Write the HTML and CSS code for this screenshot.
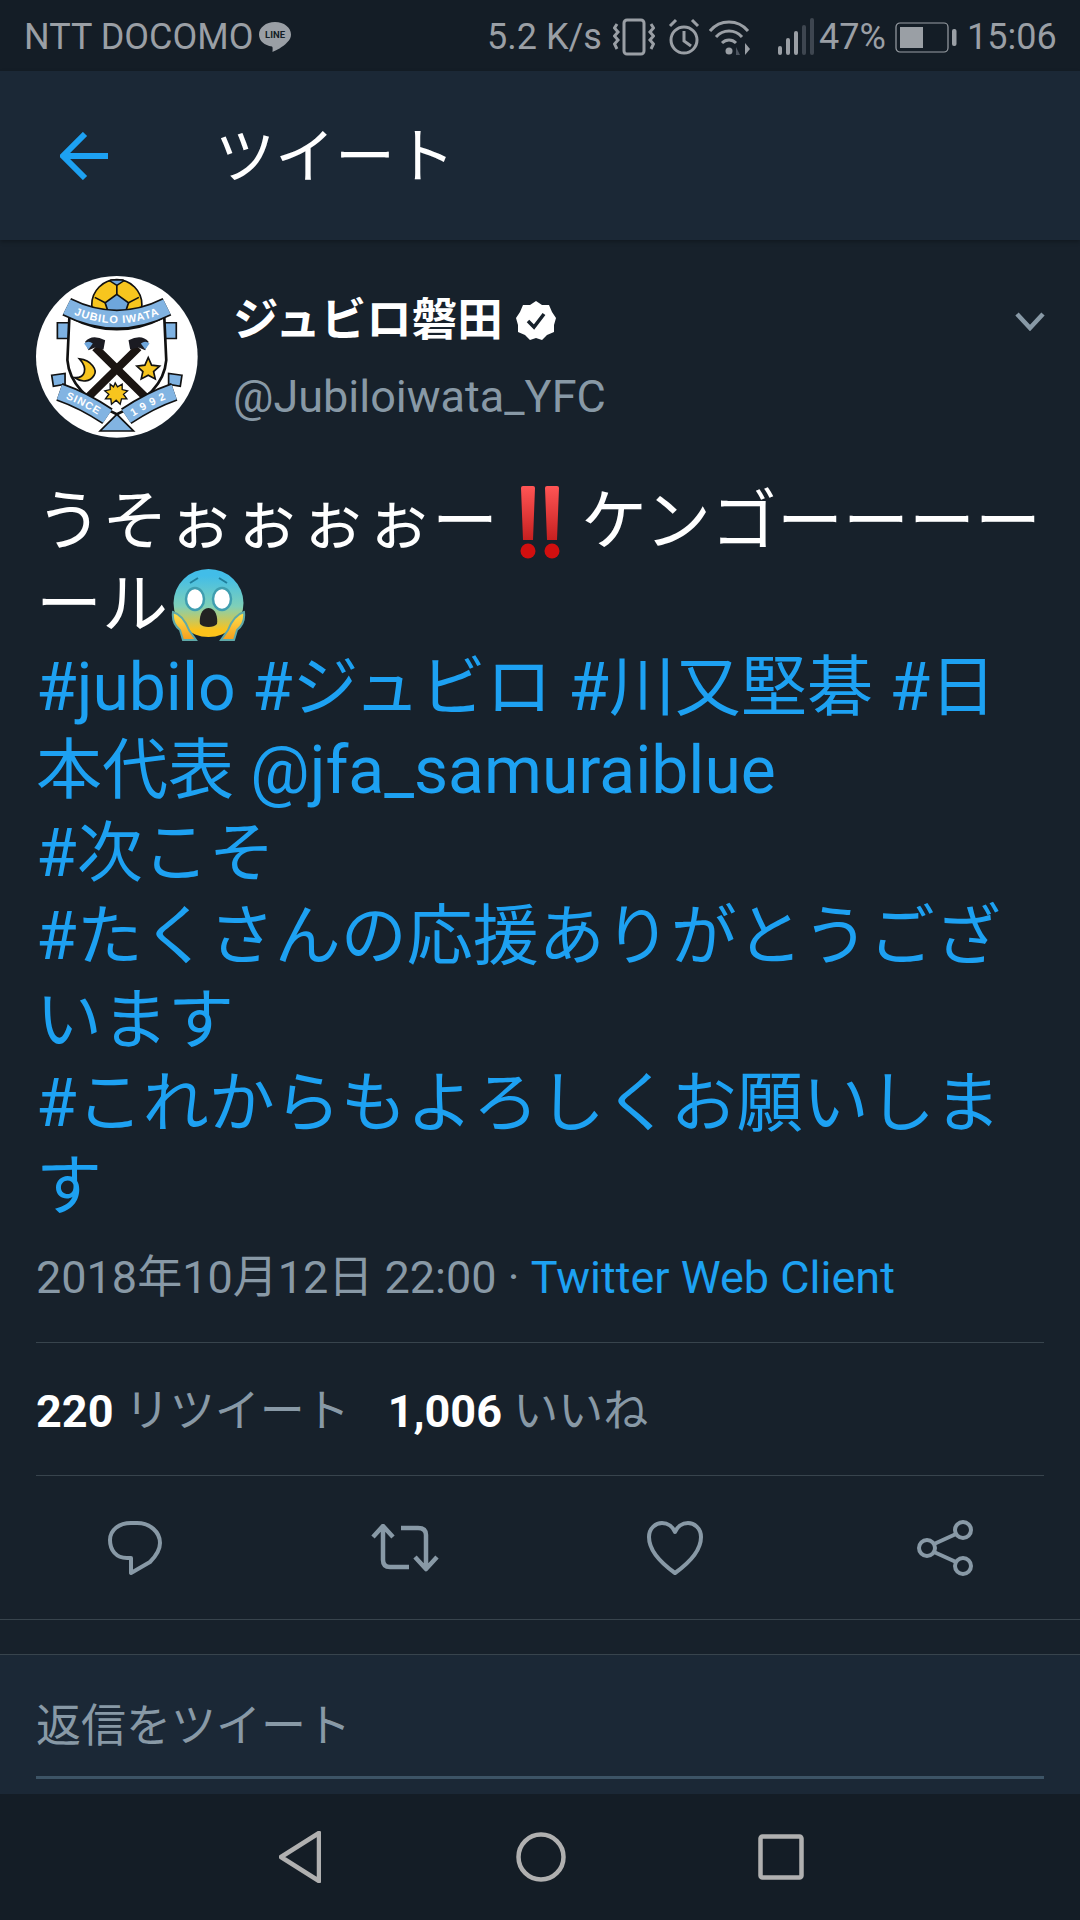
FILE: index.html
```html
<!DOCTYPE html>
<html lang="ja">
<head>
<meta charset="utf-8">
<title>ツイート</title>
<link rel="stylesheet" href="styles.css">
</head>
<body>
<div class="screen">
  <div class="status">
    <span class="carrier">NTT DOCOMO</span>
    <svg class="line-icon" width="34" height="32" viewBox="0 0 34 32"><path d="M17 1C8 1 1 6.500 1 13.500C1 20 6.500 24.500 14 25.500C15 26 14.500 29 14.500 31C18 29.500 25 26 29 21.500C32 18.500 33 16.500 33 13.500C33 6.500 26 1 17 1Z" fill="#9a9fa5"/><text x="17" y="17" class="line-text" text-anchor="middle">LINE</text></svg>
    <span class="spacer"></span>
    <span class="speed">5.2 K/s</span>
    <svg class="st-vib" width="42" height="38" viewBox="0 0 42 38"><rect x="11" y="2" width="20" height="34" rx="3" fill="none" stroke="#9a9fa5" stroke-width="3"/><path d="M4 6L1.500 10L5 14L1.500 18L5 22L1.500 26L4 31M38 6L40.500 10L37 14L40.500 18L37 22L40.500 26L38 31" fill="none" stroke="#9a9fa5" stroke-width="3"/></svg>
    <svg class="st-alarm" width="32" height="38" viewBox="0 0 32 38"><circle cx="16" cy="22" r="13" fill="none" stroke="#9a9fa5" stroke-width="3"/><path d="M16 13V23L23 28M2 8L8 2M30 8L24 2" fill="none" stroke="#9a9fa5" stroke-width="3"/></svg>
    <svg class="st-wifi" width="42" height="38" viewBox="0 0 42 38"><path d="M1 13C11 1 29 1 39 13M7 19C14 11 26 11 33 19M13 25C17 21 23 21 27 25" fill="none" stroke="#9a9fa5" stroke-width="3"/><circle cx="20" cy="33" r="3.500" fill="#9a9fa5"/><path d="M36 25V37L41 31Z" fill="#9a9fa5"/><path d="M27 37V29L31 37Z" fill="#4d5560"/></svg>
    <svg class="st-signal" width="36" height="38" viewBox="0 0 36 38"><rect x="0" y="28" width="4" height="9" rx="2" fill="#9a9fa5"/><rect x="8" y="20" width="4" height="17" rx="2" fill="#9a9fa5"/><rect x="16" y="13" width="4" height="24" rx="2" fill="#9a9fa5"/><rect x="24" y="7" width="4" height="30" rx="2" fill="#3e4650"/><rect x="32" y="0" width="4" height="37" rx="2" fill="#3e4650"/></svg>
    <span class="pct">47%</span>
    <svg class="st-batt" width="62" height="34" viewBox="0 0 62 34"><rect x="1" y="3" width="52" height="29" rx="4" fill="none" stroke="#9a9fa5" stroke-width="1.200"/><rect x="5" y="7" width="23" height="21" fill="#9a9fa5"/><rect x="57" y="9" width="4.500" height="17" rx="2" fill="#9a9fa5"/></svg>
    <span class="clock">15:06</span>
  </div>

  <header class="topbar">
    <svg class="back" width="48" height="48" viewBox="0 0 48 48"><path d="M25 2L3 24L25 46M3 24H48" fill="none" stroke="#1da1f2" stroke-width="6"/></svg>
    <h1 class="title">ツイート</h1>
  </header>

  <main class="tweet">
    <div class="author">
      <svg class="avatar" width="162" height="162" viewBox="48 48 485 485">
        <circle cx="290" cy="290" r="242" fill="#fff"/>
        <circle cx="290" cy="134" r="75" fill="#f7c51e" stroke="#111" stroke-width="5"/>
        <path d="M290 103L325 128L312 168H268L255 128Z" fill="#6ea6dc" stroke="#111" stroke-width="5"/>
        <path d="M268 62L290 76L312 62L308 60H272Z" fill="#6ea6dc" stroke="#111" stroke-width="4"/>
        <path d="M290 76V103M255 128L224 112M325 128L356 112M268 168L240 150M312 168L340 150" fill="none" stroke="#111" stroke-width="5"/>
        <path d="M112 188H158V235H112ZM422 188H468V235H422Z" fill="#7eb2e2" stroke="#111" stroke-width="5"/>
        <path d="M148 170Q290 245 432 170L438 300Q430 400 290 462Q150 400 142 300Z" fill="#fff" stroke="#111" stroke-width="8"/>
        <path d="M140 140Q290 215 440 140" fill="none" stroke="#111" stroke-width="58"/>
        <path id="rib" d="M140 140Q290 215 440 140" fill="none" stroke="#82b4e2" stroke-width="48"/>
        <text class="logo-text logo-top"><textPath href="#rib" startOffset="50%" text-anchor="middle">JUBILO IWATA</textPath></text>
        <path d="M225 262L375 410M355 262L205 410" stroke="#1b1512" stroke-width="24" fill="none"/>
        <path d="M195 245Q215 220 255 240L250 268L225 262L205 270Z" fill="#1b1b22"/>
        <path d="M385 245Q365 220 325 240L330 268L355 262L375 270Z" fill="#1b1b22"/>
        <path d="M192 250Q205 240 218 250L205 268Z" fill="#6ea6dc"/>
        <path d="M388 250Q375 240 362 250L375 268Z" fill="#6ea6dc"/>
        <path d="M178 296C215 300 232 330 222 345C210 365 185 368 163 352C195 355 205 325 178 296Z" fill="#f7c51e" stroke="#111" stroke-width="5"/>
        <path d="M384 292L394 315L418 318L400 334L405 356L384 345L363 356L368 334L350 318L374 315Z" fill="#f7c51e" stroke="#111" stroke-width="5"/>
        <path d="M285 368L292 380L306 372L306 388L322 392L310 402L320 416L304 416L300 432L288 420L274 432L272 416L256 416L266 402L254 392L270 388L270 372L280 380Z" fill="#f7c51e" stroke="#111" stroke-width="4"/>
        <path d="M95 345L135 340L135 372L100 378ZM485 345L445 340L445 372L480 378Z" fill="#7eb2e2" stroke="#111" stroke-width="5"/>
        <path id="ribl" d="M118 395Q190 420 262 468" fill="none" stroke="#111" stroke-width="56"/>
        <path d="M118 395Q190 420 262 468" fill="none" stroke="#82b4e2" stroke-width="46"/>
        <path id="ribr" d="M318 468Q390 420 462 395" fill="none" stroke="#111" stroke-width="56"/>
        <path d="M318 468Q390 420 462 395" fill="none" stroke="#82b4e2" stroke-width="46"/>
        <text class="logo-text logo-low"><textPath href="#ribl" startOffset="50%" text-anchor="middle">SINCE</textPath></text>
        <text class="logo-text logo-wide"><textPath href="#ribr" startOffset="50%" text-anchor="middle">1992</textPath></text>
        <path d="M290 462L240 512H340Z" fill="#82b4e2" stroke="#111" stroke-width="5"/>
      </svg>
      <div class="names">
        <div class="name-row">
          <span class="name">ジュビロ磐田</span>
          <svg class="badge" width="40" height="40" viewBox="0 0 40 40"><path d="M20 0L26 4L33 4L36 11L40 17L38 24L38 31L31 34L26 39L20 37L14 39L9 34L2 31L2 24L0 17L4 11L7 4L14 4Z" fill="#fff"/><path d="M12 20L18 26L28 13" fill="none" stroke="#17212b" stroke-width="3.500"/></svg>
        </div>
        <div class="handle">@Jubiloiwata_YFC</div>
      </div>
      <svg class="chevron" width="30" height="19" viewBox="0 0 30 19"><path d="M2 2L15 16L28 2" fill="none" stroke="#8899a6" stroke-width="4.500"/></svg>
    </div>

    <div class="body">
      <div class="ln">うそぉぉぉぉー<svg class="bang" width="40" height="74" viewBox="0 0 40 74"><defs><linearGradient id="r" x1="0" y1="0" x2="0" y2="1"><stop offset="0" stop-color="#ff5555"/><stop offset="1" stop-color="#c62020"/></linearGradient></defs><path d="M1 3Q1 1 3 1H13Q15 1 15 3L13 55H3ZM25 3Q25 1 27 1H37Q39 1 39 3L37 55H27Z" fill="url(#r)"/><circle cx="8" cy="66" r="7.500" fill="#d20f0f"/><circle cx="32" cy="66" r="7.500" fill="#d20f0f"/></svg>ケンゴーーーー</div>
      <div class="ln">ール<svg class="face" width="75" height="74" viewBox="0 0 75 74"><defs><linearGradient id="f" x1="0" y1="0" x2="0" y2="1"><stop offset="0.100" stop-color="#42bde8"/><stop offset="0.550" stop-color="#7fd0b8"/><stop offset="0.900" stop-color="#fcc21b"/></linearGradient><linearGradient id="h" x1="0" y1="0" x2="0" y2="1"><stop offset="0" stop-color="#ffe34d"/><stop offset="1" stop-color="#f59e1e"/></linearGradient></defs><ellipse cx="37.500" cy="35" rx="35" ry="34" fill="url(#f)"/><ellipse cx="24" cy="31" rx="9" ry="11" fill="#fff" stroke="#3f9eb0" stroke-width="2.500"/><ellipse cx="51" cy="31" rx="9" ry="11" fill="#fff" stroke="#3f9eb0" stroke-width="2.500"/><path d="M19 15L27 10M56 15L48 10" stroke="#1f7f9c" stroke-width="2" fill="none"/><path d="M37.500 40C45 40 47 50 46 56C43 60 32 60 29 56C28 50 30 40 37.500 40Z" fill="#222"/><path d="M2 44C9 46 14 52 18 62L25 72H12L9 62C4 58 1 52 2 44ZM73 44C66 46 61 52 57 62L50 72H63L66 62C71 58 74 52 73 44Z" fill="url(#h)" stroke="#5fa9a8" stroke-width="2"/></svg></div>
      <div class="ln link">#jubilo #ジュビロ #川又堅碁 #日</div>
      <div class="ln link">本代表 @jfa_samuraiblue</div>
      <div class="ln link">#次こそ</div>
      <div class="ln link">#たくさんの応援ありがとうござ</div>
      <div class="ln link">います</div>
      <div class="ln link">#これからもよろしくお願いしま</div>
      <div class="ln link">す</div>
    </div>

    <div class="meta">2018年10月12日 22:00 · <span class="client">Twitter Web Client</span></div>

    <div class="stats">
      <span class="stat"><b class="num">220</b> リツイート</span>
      <span class="stat"><b class="num">1,006</b> いいね</span>
    </div>

    <div class="actions">
      <svg width="56" height="56" viewBox="0 0 56 56"><path d="M24 3H30C43 3 53 12 53 23C53 31 48 37 43 42L24 53V38H20C9 38 3 30 3 20C3 10 12 3 24 3Z" fill="none" stroke="#8899a6" stroke-width="4" stroke-linejoin="round"/></svg>
      <svg width="68" height="48" viewBox="0 0 68 48"><path d="M2 13L12 2L22 13M12 3V36Q12 43 19 43H38M30 4H47Q55 4 55 11V45M44 33L55 45L66 33" fill="none" stroke="#8899a6" stroke-width="4.500" stroke-linejoin="round"/></svg>
      <svg width="56" height="54" viewBox="0 0 56 54"><path d="M28 52C14 42 2 30 2 16C2 7 9 2 15 2C21 2 26 6 28 11C30 6 35 2 41 2C47 2 54 7 54 16C54 30 42 42 28 52Z" fill="none" stroke="#8899a6" stroke-width="4" stroke-linejoin="round"/></svg>
      <svg width="56" height="56" viewBox="0 0 56 56"><circle cx="46" cy="10" r="8" fill="none" stroke="#8899a6" stroke-width="4"/><circle cx="10" cy="28" r="8" fill="none" stroke="#8899a6" stroke-width="4"/><circle cx="46" cy="46" r="8" fill="none" stroke="#8899a6" stroke-width="4"/><path d="M17 24L39 14M17 32L39 42" stroke="#8899a6" stroke-width="4"/></svg>
    </div>
  </main>

  <div class="reply">
    <div class="reply-field">返信をツイート</div>
  </div>

  <nav class="navbar">
    <svg width="42" height="52" viewBox="0 0 42 52"><path d="M40 2V50L2 26Z" fill="none" stroke="#b0b0b0" stroke-width="4.500" stroke-linejoin="round"/></svg>
    <svg class="nav-home" width="50" height="50" viewBox="0 0 50 50"><circle cx="25" cy="25" r="22.500" fill="none" stroke="#b0b0b0" stroke-width="4.500"/></svg>
    <svg width="46" height="46" viewBox="0 0 46 46"><rect x="2.500" y="2.500" width="41" height="41" rx="2" fill="none" stroke="#b0b0b0" stroke-width="4.500"/></svg>
  </nav>
</div>
</body>
</html>
```

FILE: styles.css
```css
* { box-sizing: border-box; }
html, body { margin: 0; padding: 0; }
body {
  font-family: Roboto, "Noto Sans CJK JP", sans-serif;
  background: #17212b;
  color: #fff;
}
.screen {
  width: 1080px;
  height: 1920px;
  display: flex;
  flex-direction: column;
  overflow: hidden;
}

.status {
  height: 71px;
  flex: none;
  background: #141d26;
  color: #9a9fa5;
  display: flex;
  align-items: center;
  padding: 2px 26px 0 24px;
  font-size: 36px;
  position: relative;
}
.carrier { width: 222px; white-space: nowrap; }
.line-icon { margin-left: 12px; margin-top: 1px; }
.line-text { font: 700 9.500px Roboto, sans-serif; fill: #141d26; }
.spacer { flex: 1; }
.speed { width: 113px; white-space: nowrap; }
.st-vib { margin-left: 13px; }
.st-alarm { margin-left: 13px; }
.st-wifi { margin-left: 9px; }
.st-signal { margin-left: 27px; }
.pct { margin-left: 5px; width: 65px; }
.st-batt { margin-left: 11px; }
.clock { margin-left: 10px; width: 87px; white-space: nowrap; }

.topbar {
  height: 169px;
  flex: none;
  background: #1b2836;
  display: flex;
  align-items: center;
  padding-left: 60px;
  box-shadow: 0 2px 4px rgba(0, 0, 0, 0.25);
  position: relative;
}
.title {
  margin: 4px 0 0 107px;
  font-size: 60px;
  font-weight: 400;
  line-height: 1;
}

.tweet {
  flex: 1;
  padding: 36px 36px 0;
  background: #17212b;
  border-bottom: 1px solid #38444d;
  margin-bottom: 34px;
  min-height: 0;
}
.author {
  display: flex;
  align-items: flex-start;
  height: 164px;
}
.avatar { flex: none; }
.names { margin-left: 35px; flex: 1; }
.name-row {
  display: flex;
  align-items: center;
  height: 76px;
  margin-top: 7px;
}
.name { font-size: 45.500px; font-weight: 700; line-height: 76px; }
.badge { margin-left: 13px; }
.handle {
  margin-top: 6px;
  font-size: 45px;
  line-height: 64px;
  color: #8899a6;
}
.chevron { margin-top: 36px; margin-right: -1px; }
.logo-text { font: 700 30px "Liberation Sans", sans-serif; fill: #fff; dominant-baseline: central; }
.logo-top { letter-spacing: 2px; font-size: 33px; }
.logo-low { letter-spacing: 3px; font-size: 32px; }
.logo-wide { letter-spacing: 14px; font-size: 32px; }

.body { margin-top: 40px; }
.ln {
  font-size: 66px;
  line-height: 83.100px;
  height: 83.100px;
  white-space: nowrap;
  display: flex;
  align-items: center;
}
.link { color: #1da1f2; }
.bang { margin: 0 21px 0 22px; flex: none; }
.face { margin-left: 3px; flex: none; }

.meta {
  margin-top: 21px;
  font-size: 45px;
  line-height: 58px;
  color: #8899a6;
  white-space: nowrap;
}
.client { color: #1da1f2; }

.stats {
  margin-top: 35px;
  height: 134px;
  border-top: 1px solid #38444d;
  border-bottom: 1px solid #38444d;
  display: flex;
  align-items: center;
  gap: 38px;
  font-size: 45px;
  color: #8899a6;
  padding-bottom: 3px;
}
.num { color: #fff; font-weight: 700; }

.actions {
  display: grid;
  grid-template-columns: repeat(4, 270px);
  justify-items: center;
  align-items: center;
  height: 145px;
  margin-left: -36px;
}

.reply {
  height: 140px;
  flex: none;
  background: #1b2836;
  border-top: 1px solid #38444d;
  padding: 0 36px;
}
.reply-field {
  height: 124px;
  border-bottom: 3px solid #3d5466;
  font-size: 45px;
  color: #8899a6;
  display: flex;
  align-items: center;
  padding-top: 14px;
}

.navbar {
  height: 126px;
  flex: none;
  background: #141d26;
  display: flex;
  align-items: center;
  justify-content: center;
  gap: 195px;
  padding-left: 2px;
}
.nav-home { margin-right: -3px; }
```
